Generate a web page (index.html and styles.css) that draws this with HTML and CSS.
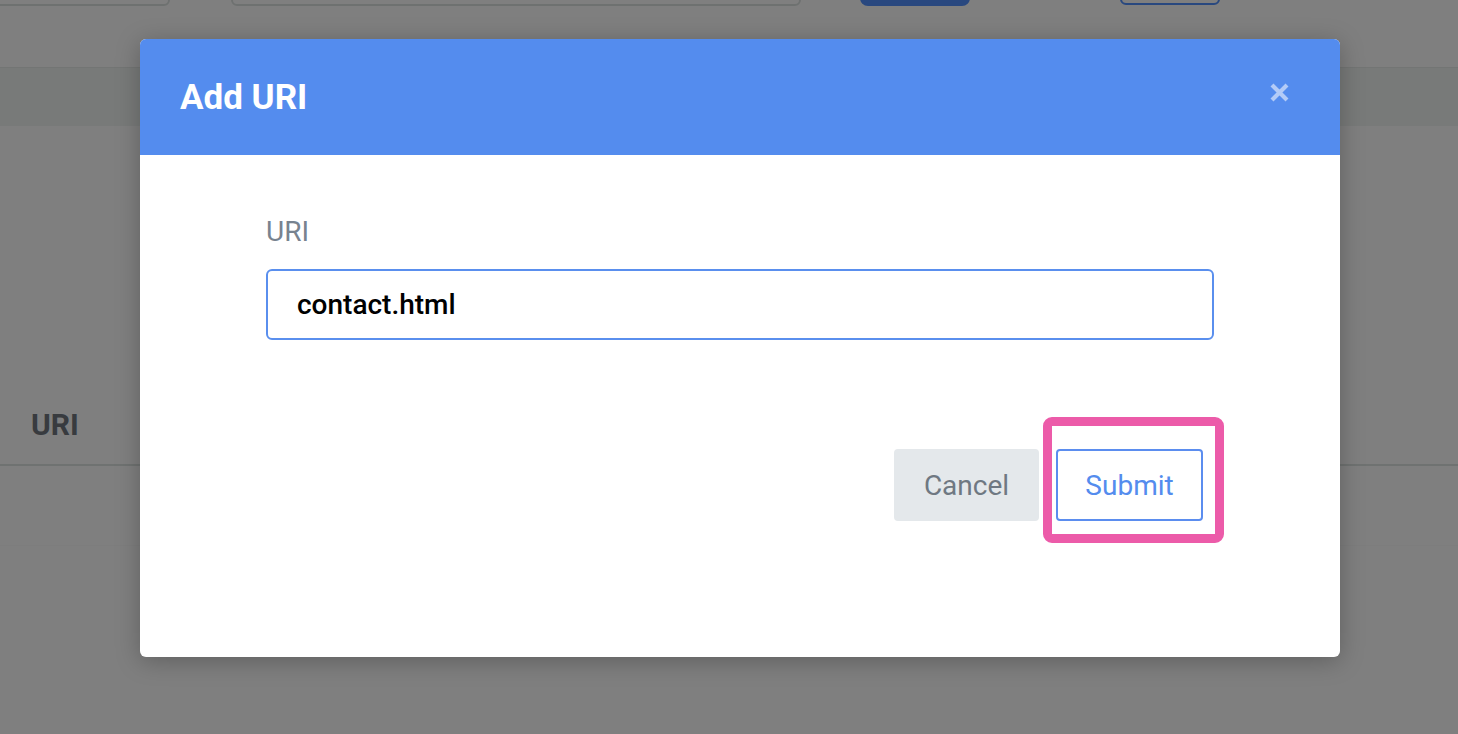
FILE: index.html
```html
<!DOCTYPE html>
<html lang="en">
<head>
<meta charset="utf-8">
<title>Add URI</title>
<link rel="stylesheet" href="styles.css">
</head>
<body>
<div class="page">
  <div class="toolbar">
    <div class="tb-input tb-input-a"></div>
    <div class="tb-input tb-input-b"></div>
    <div class="tb-btn tb-btn-solid"></div>
    <div class="tb-btn tb-btn-outline"></div>
  </div>
  <div class="band"></div>
  <div class="table-head">
    <div class="th">URI</div>
  </div>
  <div class="table-row"></div>
</div>
<div class="overlay"></div>
<div class="modal" role="dialog">
  <div class="modal-header">
    <h2 class="modal-title">Add URI</h2>
    <button class="close" aria-label="Close">
      <svg width="21" height="21" viewBox="0 0 21 21"><path d="M3 3 L18 18 M18 3 L3 18" stroke="currentColor" stroke-width="4.2" stroke-linecap="butt"/></svg>
    </button>
  </div>
  <div class="modal-body">
    <label class="field-label">URI</label>
    <div class="field-input">contact.html</div>
  </div>
  <div class="modal-footer">
    <button class="btn btn-cancel">Cancel</button>
    <div class="submit-wrap">
      <button class="btn btn-submit">Submit</button>
      <div class="highlight"></div>
    </div>
  </div>
</div>
</body>
</html>
```
FILE: styles.css
```css
* { box-sizing: border-box; }
html, body { margin: 0; padding: 0; }
body {
  width: 1458px;
  height: 734px;
  overflow: hidden;
  background: #ffffff;
  font-family: Roboto, "Liberation Sans", Arial, sans-serif;
  position: relative;
}
.page { width: 1458px; height: 734px; }
.toolbar {
  height: 67px;
  display: flex;
  align-items: flex-start;
}
.tb-input, .tb-btn {
  height: 40px;
  margin-top: -34px;
  border-radius: 6px;
}
.tb-input { border: 2px solid #dde3e1; background: #fff; }
.tb-input-a { width: 190px; margin-left: -20px; }
.tb-input-b { width: 570px; margin-left: 61px; }
.tb-btn-solid { width: 110px; margin-left: 59px; background: #5290fe; border-radius: 0 0 8px 8px; }
.tb-btn-outline { width: 100px; margin-left: 150px; border: 2px solid #5290fe; height: 39px; }
.band {
  height: 59px;
  background: #f0f4f2;
  border-top: 1px solid #e6ebe9;
}
.table-head {
  height: 340px;
  border-bottom: 2px solid #dfe5e3;
  display: flex;
  align-items: flex-end;
  padding: 0 0 22px 31px;
}
.th {
  font-size: 30px;
  font-weight: 700;
  color: #70767f;
  line-height: 34px;
}
.table-row {
  height: 80px;
  border-bottom: 1px solid #fafbfb;
}
.overlay {
  position: absolute;
  inset: 0;
  background: rgba(0, 0, 0, 0.5);
}
.modal {
  position: absolute;
  left: 140px;
  top: 39px;
  width: 1200px;
  height: 618px;
  background: #fff;
  border-radius: 6px;
  overflow: hidden;
  box-shadow: 0 4px 24px rgba(0, 0, 0, 0.25);
  display: flex;
  flex-direction: column;
}
.modal-header {
  height: 116px;
  background: #548cee;
  display: flex;
  align-items: center;
  justify-content: space-between;
  padding: 0 50px 0 40px;
}
.modal-title {
  margin: 0;
  color: #fff;
  font-size: 35px;
  font-weight: 700;
  line-height: 1;
  padding-top: 0;
}
.close {
  background: none;
  border: 0;
  padding: 0;
  margin-top: -10px;
  color: #b3cbf7;
  display: flex;
}
.modal-body {
  padding: 60px 126px 0;
  display: flex;
  flex-direction: column;
}
.field-label {
  font-size: 28px;
  color: #78838f;
  line-height: 34px;
  margin-bottom: 20px;
}
.field-input {
  height: 71px;
  border: 2px solid #5a8fee;
  border-radius: 6px;
  padding: 0 29px;
  display: flex;
  align-items: center;
  font-size: 28px;
  font-weight: 500;
  color: #000;
}
.modal-footer {
  display: flex;
  justify-content: flex-end;
  gap: 17px;
  padding: 109px 137px 0 0;
}
.btn {
  height: 72px;
  border-radius: 4px;
  font-family: inherit;
  font-size: 28px;
  padding: 0;
}
.btn-cancel {
  width: 145px;
  background: #e4e8eb;
  border: 0;
  color: #6f7882;
}
.submit-wrap { position: relative; }
.btn-submit {
  width: 147px;
  background: #fff;
  border: 2px solid #5b8def;
  color: #548cee;
}
.highlight {
  position: absolute;
  left: -13px;
  top: -32px;
  right: -21px;
  bottom: -22px;
  border: 9px solid #ec5ba9;
  border-radius: 9px;
  pointer-events: none;
}
```
